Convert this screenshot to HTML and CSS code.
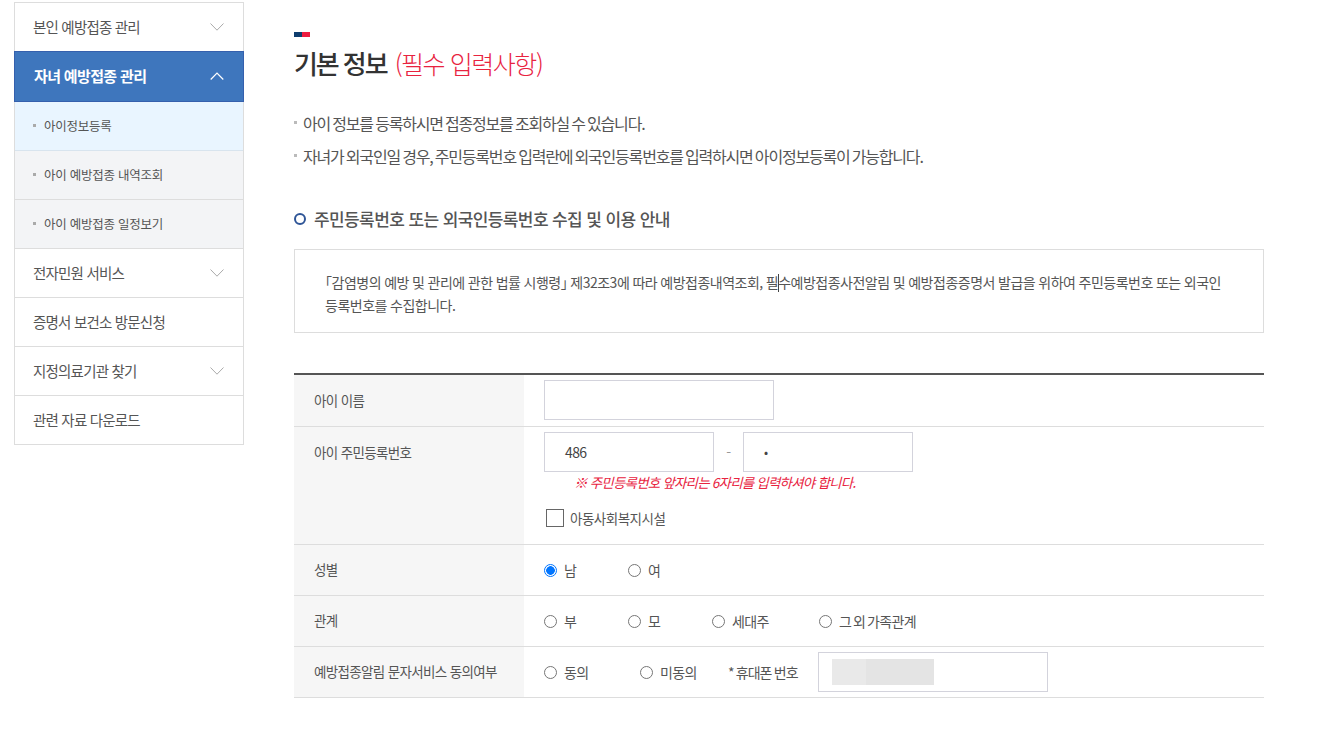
FILE: index.html
```html
<!DOCTYPE html>
<html lang="ko">
<head>
<meta charset="utf-8">
<title>기본 정보</title>
<link rel="stylesheet" href="styles.css">
</head>
<body>
<div class="page">
  <nav class="side">
    <div class="m"><span>본인 예방접종 관리</span><svg class="chev" viewBox="0 0 14 8"><path d="M.5.5 7 7.2 13.5.5" fill="none" stroke="#aaa"/></svg></div>
    <div class="m active"><span>자녀 예방접종 관리</span><svg class="chev" viewBox="0 0 14 8"><path d="M.7 7.5 7 1l6.3 6.5" fill="none" stroke="#fff" stroke-width="1.2"/></svg></div>
    <div class="s cur"><i></i>아이정보등록</div>
    <div class="s"><i></i>아이 예방접종 내역조회</div>
    <div class="s"><i></i>아이 예방접종 일정보기</div>
    <div class="m"><span>전자민원 서비스</span><svg class="chev" viewBox="0 0 14 8"><path d="M.5.5 7 7.2 13.5.5" fill="none" stroke="#aaa"/></svg></div>
    <div class="m"><span>증명서 보건소 방문신청</span></div>
    <div class="m"><span>지정의료기관 찾기</span><svg class="chev" viewBox="0 0 14 8"><path d="M.5.5 7 7.2 13.5.5" fill="none" stroke="#aaa"/></svg></div>
    <div class="m"><span>관련 자료 다운로드</span></div>
  </nav>
  <main class="main">
    <div class="mark"><b></b><b></b></div>
    <h1>기본 정보 <em>(필수 입력사항)</em></h1>
    <ul class="notes">
      <li>아이 정보를 등록하시면 접종정보를 조회하실 수 있습니다.</li>
      <li>자녀가 외국인일 경우, 주민등록번호 입력란에 외국인등록번호를 입력하시면 아이정보등록이 가능합니다.</li>
    </ul>
    <h2><i></i>주민등록번호 또는 외국인등록번호 수집 및 이용 안내</h2>
    <div class="box"><span class="half">「</span>감염병의 예방 및 관리에 관한 법률 시행령<span class="half">」</span> 제32조3에 따라 예방접종내역조회, 필<i class="caret"></i>수예방접종사전알림 및 예방접종증명서 발급을 위하여 주민등록번호 또는 외국인<br>등록번호를 수집합니다.</div>
    <div class="form">
      <div class="row r1"><div class="th">아이 이름</div><div class="td"><div class="inp w230"></div></div></div>
      <div class="row r2"><div class="th top">아이 주민등록번호</div><div class="td col">
        <div class="line"><div class="inp w170">486</div><span class="dash">-</span><div class="inp w170 dot">•</div></div>
        <p class="warn">※ 주민등록번호 앞자리는 6자리를 입력하셔야 합니다.</p>
        <label class="chk"><i></i>아동사회복지시설</label>
      </div></div>
      <div class="row"><div class="th">성별</div><div class="td">
        <span class="rad w84"><i class="on"></i>남</span><span class="rad"><i></i>여</span>
      </div></div>
      <div class="row"><div class="th">관계</div><div class="td">
        <span class="rad w84"><i></i>부</span><span class="rad w84"><i></i>모</span><span class="rad w107"><i></i>세대주</span><span class="rad"><i></i>그 외 가족관계</span>
      </div></div>
      <div class="row"><div class="th">예방접종알림 문자서비스 동의여부</div><div class="td">
        <span class="rad w96"><i></i>동의</span><span class="rad w88"><i></i>미동의</span><span class="ph">* 휴대폰 번호</span>
        <div class="inp w230 mask"><b></b><b></b></div>
      </div></div>
    </div>
  </main>
</div>
</body>
</html>
```
FILE: styles.css
```css
*{box-sizing:border-box}
html,body{margin:0;padding:0;background:#fff}
body{width:1323px;height:736px;overflow:hidden;font-family:"Noto Sans CJK KR","Noto Sans",sans-serif;font-size:14px;color:#555;letter-spacing:-.6px}
.page{display:flex;align-items:flex-start;padding:2px 0 0 14px}
.side{width:230px;flex:none;border:1px solid #ddd;margin-right:50px}
.m{height:49px;display:flex;align-items:center;justify-content:space-between;padding:0 19px 2px 18px;border-bottom:1px solid #ddd;color:#555;font-size:14.5px;letter-spacing:-.8px}
.m:last-child{border-bottom:0;height:48px}
.chev{width:14px;height:8px;display:block;margin-top:2px}
.m.active{height:51px;margin:-1px -1px 0;padding:0 19px 2px 19px;width:230px;background:#3e76bd;border:1px solid #3560ad;color:#fff;font-weight:700;font-size:15px;letter-spacing:-.65px}
.active .chev{margin-top:0}
.s{height:49px;display:flex;align-items:center;padding:0 0 2px 18px;background:#f3f4f6;border-bottom:1px solid #ddd;font-size:12.5px;color:#555;letter-spacing:-.25px}
.s i{width:3px;height:3px;background:#aaa;margin-right:8px;flex:none}
.s.cur{background:#e9f5ff;border-bottom-color:#d8e4ee}
.main{width:970px;padding-top:30px}
.mark{display:flex;height:5px}
.mark b{width:8px;background:#0f3d6e}
.mark b+b{background:#ed1c40}
h1{margin:6px 0 0;font-size:26px;line-height:40px;font-weight:500;color:#333;letter-spacing:-2.1px}
h1 em{font-style:normal;font-size:25px;font-weight:300;color:#e8233f;margin-left:3px;letter-spacing:-1.45px}
.notes{list-style:none;margin:24px 0 0;padding:0;font-size:16px;letter-spacing:-1.2px;word-spacing:-1px}
.notes li{height:33px;line-height:33px;padding-left:9px;position:relative}
.notes li:before{content:"";position:absolute;left:0;top:14px;width:3px;height:3px;background:#bbb}
h2{display:flex;align-items:center;margin:33px 0 0;font-size:17px;line-height:26px;font-weight:500;color:#555;letter-spacing:-.6px}
h2 i{width:12px;height:12px;border:2px solid #2f5597;border-radius:50%;margin-right:8px;flex:none}
.box{margin-top:17px;height:84px;border:1px solid #ddd;padding:21px 30px 0;font-size:14px;line-height:23px;letter-spacing:-.5px;word-spacing:-.3px;color:#555}
.half{font-feature-settings:"halt"}
.caret{display:inline-block;width:1px;height:18px;background:#444;vertical-align:-4px;margin:0 -.5px}
.form{margin-top:40px;border-top:2px solid #555}
.row{display:flex;height:51px;border-bottom:1px solid #ddd}
.r1{height:52px}
.r1 .td{padding-bottom:1px}
.r2{height:118px}
.th{width:230px;flex:none;background:#f6f6f6;padding:0 0 2px 20px;display:flex;align-items:center;font-size:13.5px;letter-spacing:-.65px;color:#555}
.th.top{align-items:flex-start;padding-top:15px}
.td{flex:1;display:flex;align-items:center;padding-left:20px}
.col{flex-direction:column;align-items:flex-start;padding-top:5px}
.inp{height:40px;border:1px solid #d3d3dc;display:flex;align-items:center;flex:none;background:#fff}
.w230{width:230px}
.w170{width:170px;padding:0 0 1px 20px;font-size:14px;color:#444}
.line{display:flex;align-items:center}
.dash{width:29px;text-align:center;color:#999}
.dot{font-size:12px}
.warn{margin:0 0 0 30px;color:#e8233f;font-style:italic;font-size:13.5px;line-height:20px;letter-spacing:-.8px}
.chk{display:flex;align-items:center;margin:16px 0 0 2px;font-size:13.5px;color:#555;letter-spacing:-.5px}
.chk i{width:18px;height:18px;border:1px solid #666;margin-right:6px;background:#fff}
.rad{display:flex;align-items:center;font-size:14px;color:#555;letter-spacing:-.65px;word-spacing:-1.5px}
.rad i{width:13px;height:13px;border:1px solid #767676;border-radius:50%;margin-right:7px;flex:none;background:#fff}
.rad i.on{border-color:#0075ff;background:radial-gradient(circle,#0075ff 0,#0075ff 4px,#fff 4.6px)}
.w84{width:84px}
.w107{width:107px}
.w96{width:96px}
.w88{width:88px}
.ph{width:90px;font-size:14px;letter-spacing:-.95px;word-spacing:-.8px}
.mask{padding-left:13px}
.mask b{display:block;width:34px;height:26px;background:#e9e9e9}
.mask b+b{width:68px;background:#e4e4e4}
```
